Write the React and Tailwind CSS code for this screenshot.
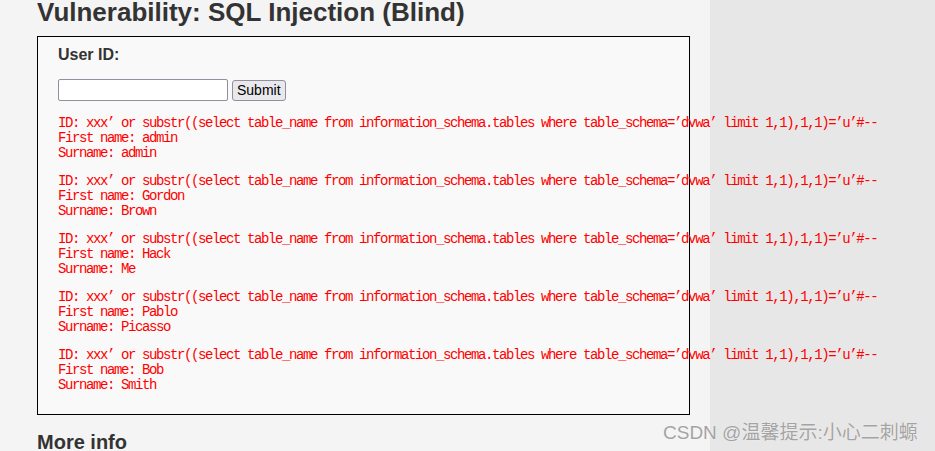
import React from 'react';

const results = [
  { first: 'admin', last: 'admin' },
  { first: 'Gordon', last: 'Brown' },
  { first: 'Hack', last: 'Me' },
  { first: 'Pablo', last: 'Picasso' },
  { first: 'Bob', last: 'Smith' },
];

const payload = "xxx’ or substr((select table_name from information_schema.tables where table_schema=’dvwa’ limit 1,1),1,1)=’u’#--";

const App = () => {
  return (
    <div className="relative flex w-[935px] h-[451px] overflow-hidden font-['Liberation_Sans',Arial,sans-serif]">
      {/* Main column */}
      <div className="w-[710px] shrink-0 bg-[#f4f4f4] pl-[37px]">
        <h1 className="mt-[-2px] text-[26px] leading-[29px] font-bold text-[#333]">
          Vulnerability: SQL Injection (Blind)
        </h1>

        {/* Form + results box */}
        <div className="relative z-10 mt-[9px] w-[653px] h-[379px] border border-black bg-[#f8f9f8] pl-[20px] pt-[9px]">
          <p className="text-[16px] leading-[18px] font-bold text-[#333]">User ID:</p>
          <div className="mt-[15px] flex items-center">
            <input
              type="text"
              className="w-[170px] h-[22px] border border-[#8f8f9d] rounded-[2px] bg-white"
            />
            <button className="ml-[4px] h-[21px] px-[4px] border border-[#8f8f9d] rounded-[3px] bg-[#e9e9ed] text-[14px] leading-[17px] text-black">
              Submit
            </button>
          </div>

          <div className="mt-[15px] flex flex-col gap-[13px]">
            {results.map((r, i) => (
              <pre
                key={i}
                className="whitespace-pre font-['Liberation_Mono','Courier_New',monospace] text-[14px] leading-[15px] tracking-[-1.4px] text-[#ff0000]"
              >
                {`ID: ${payload}\nFirst name: ${r.first}\nSurname: ${r.last}`}
              </pre>
            ))}
          </div>
        </div>

        <h2 className="mt-[16px] text-[20px] leading-[23px] font-bold text-[#333]">More info</h2>
      </div>

      {/* Side background */}
      <div className="flex-1 bg-[#e7e7e7]" />

      {/* Watermark */}
      <div className="absolute z-20 left-[663px] top-[420px] text-[19px] leading-[25px] text-[#a3a3a3] font-['Liberation_Sans','Noto_Sans_CJK_SC',sans-serif] [text-shadow:0_0_1px_#ffffff]">
        CSDN @温馨提示:小心二刺螈
      </div>
    </div>
  );
};

export default App;
